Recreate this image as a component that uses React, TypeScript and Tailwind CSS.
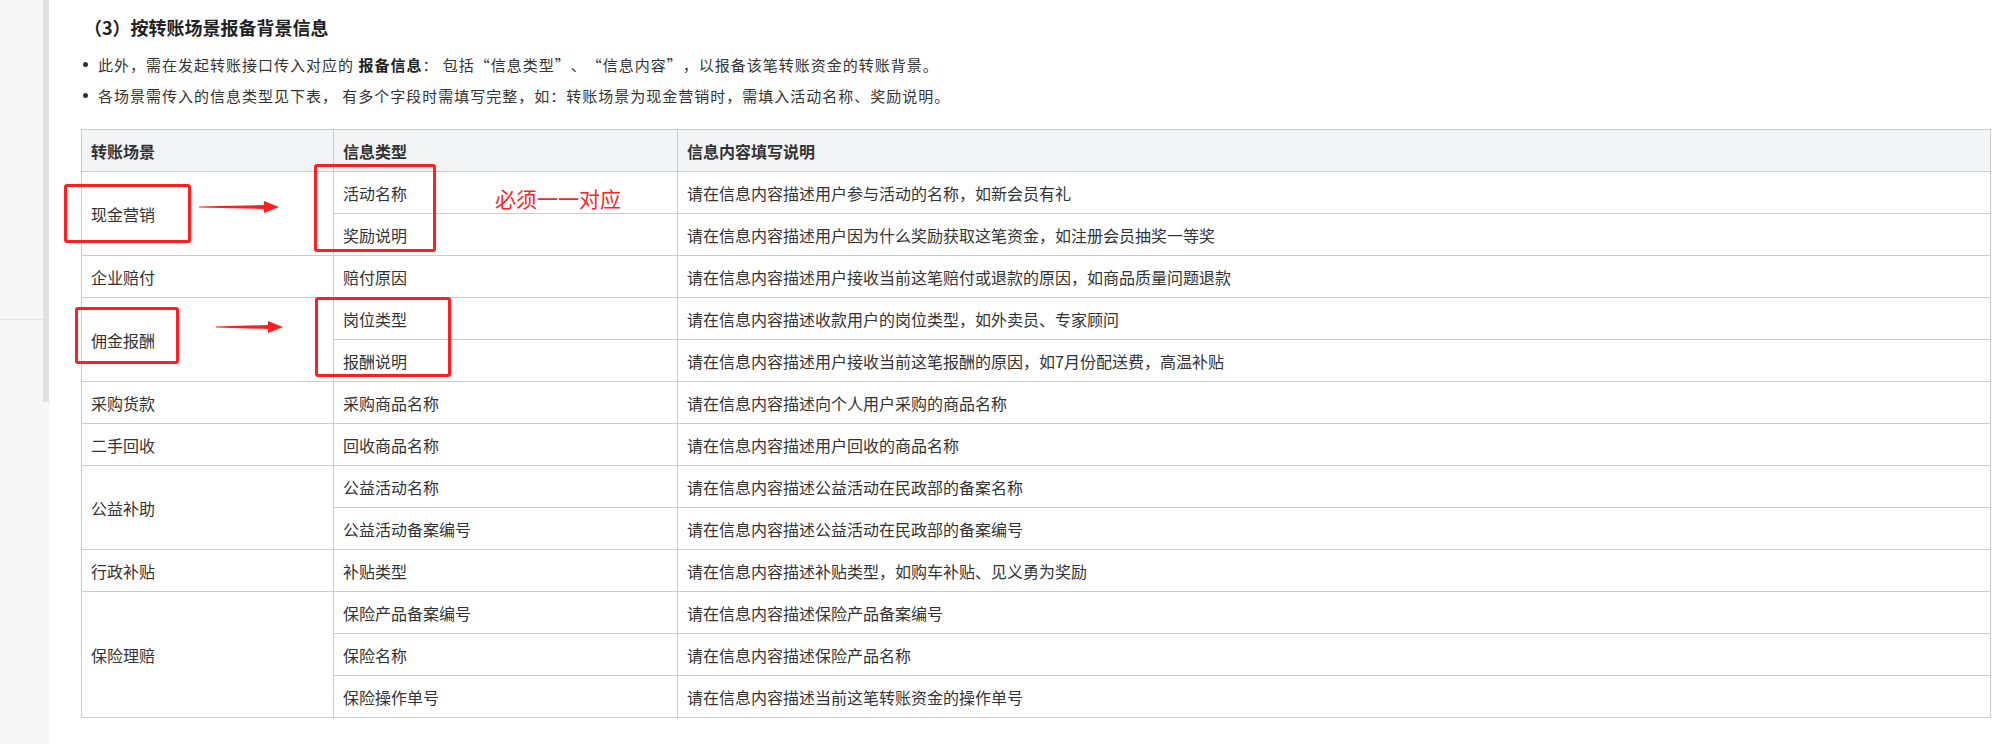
import React from "react";

type Row = { scene?: string; span?: number; type: string; desc: string };

const rows: Row[] = [
  { scene: "现金营销", span: 2, type: "活动名称", desc: "请在信息内容描述用户参与活动的名称，如新会员有礼" },
  { type: "奖励说明", desc: "请在信息内容描述用户因为什么奖励获取这笔资金，如注册会员抽奖一等奖" },
  { scene: "企业赔付", span: 1, type: "赔付原因", desc: "请在信息内容描述用户接收当前这笔赔付或退款的原因，如商品质量问题退款" },
  { scene: "佣金报酬", span: 2, type: "岗位类型", desc: "请在信息内容描述收款用户的岗位类型，如外卖员、专家顾问" },
  { type: "报酬说明", desc: "请在信息内容描述用户接收当前这笔报酬的原因，如7月份配送费，高温补贴" },
  { scene: "采购货款", span: 1, type: "采购商品名称", desc: "请在信息内容描述向个人用户采购的商品名称" },
  { scene: "二手回收", span: 1, type: "回收商品名称", desc: "请在信息内容描述用户回收的商品名称" },
  { scene: "公益补助", span: 2, type: "公益活动名称", desc: "请在信息内容描述公益活动在民政部的备案名称" },
  { type: "公益活动备案编号", desc: "请在信息内容描述公益活动在民政部的备案编号" },
  { scene: "行政补贴", span: 1, type: "补贴类型", desc: "请在信息内容描述补贴类型，如购车补贴、见义勇为奖励" },
  { scene: "保险理赔", span: 3, type: "保险产品备案编号", desc: "请在信息内容描述保险产品备案编号" },
  { type: "保险名称", desc: "请在信息内容描述保险产品名称" },
  { type: "保险操作单号", desc: "请在信息内容描述当前这笔转账资金的操作单号" },
];

function Arrow({ left, top, width }: { left: number; top: number; width: number }) {
  const h = 14;
  const cy = h / 2;
  const head = 15;
  return (
    <svg
      className="absolute"
      style={{ left, top: top - h / 2 }}
      width={width}
      height={h}
      viewBox={`0 0 ${width} ${h}`}
    >
      <polygon
        points={`0,${cy - 0.6} ${width - head},${cy - 2} ${width - head},${cy - 6} ${width},${cy} ${width - head},${cy + 6} ${width - head},${cy + 2} 0,${cy + 0.6}`}
        fill="#ff1f1f"
      />
    </svg>
  );
}

function RedBox({ left, top, w, h }: { left: number; top: number; w: number; h: number }) {
  return (
    <div
      className="absolute border-[3px] border-[#ff1f1f] rounded-[3px]"
      style={{ left, top, width: w, height: h }}
    />
  );
}

function LQ() {
  return <span className="inline-block w-[16px] text-right">“</span>;
}
function RQ() {
  return <span className="inline-block w-[16px] text-left">”</span>;
}

export default function App() {
  return (
    <div
      className="relative flex w-[2014px] h-[744px] bg-white text-[#333] overflow-hidden"
      style={{ fontFamily: '"Noto Sans CJK SC", "Noto Sans", sans-serif' }}
    >
      {/* left sidebar */}
      <div className="w-[43px] h-full bg-[#f7f7f8] flex flex-col">
        <div className="h-[319px]" />
        <div className="h-px bg-[#e6e6e6]" />
      </div>
      <div className="w-[6px] h-full bg-[#f7f7f8] flex flex-col">
        <div className="h-[402px] bg-[#e2e2e2]" />
      </div>

      {/* main content */}
      <div className="flex-1 pl-[32px] pr-[23px]">
        <h3 className="pt-[13px] pl-[3px] text-[18px] leading-[28px] font-bold text-[#222]">
          （3）按转账场景报备背景信息
        </h3>
        <ul className="mt-[8px] pl-[2px] text-[15px] leading-[31px] text-[#333]">
          <li className="flex items-center">
            <span className="w-[5px] h-[5px] rounded-full bg-[#333] mr-[10px]" />
            <span className="tracking-[1px]">
              此外，需在发起转账接口传入对应的 <b className="font-bold text-[#222]">报备信息</b>： 包括<LQ />信息类型<RQ />、<LQ />信息内容<RQ />，以报备该笔转账资金的转账背景。
            </span>
          </li>
          <li className="flex items-center">
            <span className="w-[5px] h-[5px] rounded-full bg-[#333] mr-[10px]" />
            <span className="tracking-[1px]">
              各场景需传入的信息类型见下表， 有多个字段时需填写完整，如：转账场景为现金营销时，需填入活动名称、奖励说明。
            </span>
          </li>
        </ul>

        <table className="mt-[18px] w-[1910px] table-fixed border-collapse text-[16px]">
          <colgroup>
            <col className="w-[252px]" />
            <col className="w-[344px]" />
            <col />
          </colgroup>
          <thead>
            <tr className="h-[42px] bg-[#f3f4f6]">
              <th className="border border-[#c9ccd3] px-[9px] text-left font-bold text-[#333]">转账场景</th>
              <th className="border border-[#c9ccd3] px-[9px] text-left font-bold text-[#333]">信息类型</th>
              <th className="border border-[#c9ccd3] px-[9px] text-left font-bold text-[#333]">信息内容填写说明</th>
            </tr>
          </thead>
          <tbody>
            {rows.map((r, i) => (
              <tr key={i} className="h-[42px]">
                {r.scene && (
                  <td rowSpan={r.span} className="border border-[#c9ccd3] px-[9px] align-middle">
                    {r.scene}
                  </td>
                )}
                <td className="border border-[#c9ccd3] px-[9px]">{r.type}</td>
                <td className="border border-[#c9ccd3] px-[9px]">{r.desc}</td>
              </tr>
            ))}
          </tbody>
        </table>
      </div>

      {/* annotations */}
      <RedBox left={64} top={184} w={127} h={59} />
      <RedBox left={314} top={164} w={122} h={88} />
      <RedBox left={75} top={307} w={104} h={57} />
      <RedBox left={315} top={297} w={136} h={80} />
      <Arrow left={199} top={207} width={80} />
      <Arrow left={216} top={327} width={67} />
      <div className="absolute left-[495px] top-[184px] text-[21px] leading-[28px] text-[#ff1f1f]">
        必须一一对应
      </div>
    </div>
  );
}
